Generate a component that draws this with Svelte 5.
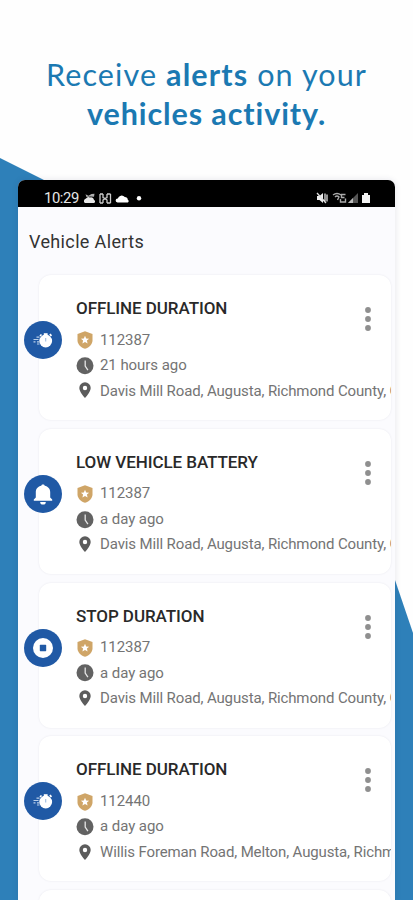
<script>
  const alerts = [
    { title: 'OFFLINE DURATION', icon: 'offline', unit: '112387', time: '21 hours ago', place: 'Davis Mill Road, Augusta, Richmond County, Georgia' },
    { title: 'LOW VEHICLE BATTERY', icon: 'bell', unit: '112387', time: 'a day ago', place: 'Davis Mill Road, Augusta, Richmond County, Georgia' },
    { title: 'STOP DURATION', icon: 'stop', unit: '112387', time: 'a day ago', place: 'Davis Mill Road, Augusta, Richmond County, Georgia' },
    { title: 'OFFLINE DURATION', icon: 'offline', unit: '112440', time: 'a day ago', place: 'Willis Foreman Road, Melton, Augusta, Richmond County' }
  ];
</script>

<main class="page">
  <svg class="backdrop" viewBox="0 0 413 900" aria-hidden="true">
    <path d="M0 158L42 179L200 260L395 580L413 633V900H0Z" fill="#2e80b9" />
  </svg>
  <h1 class="headline">
    <span class="line one">Receive <b>alerts</b> on your</span>
    <span class="line two"><b>vehicles activity.</b></span>
  </h1>

  <section class="phone">
    <header class="status">
      <span class="clock">10:29</span>
      <svg class="left-icons" width="60" height="14" viewBox="0 0 60 14">
        <g fill="#e8e8e8">
          <path d="M1 12a2.500 2.500 0 0 1 1-4.500a3 3 0 0 1 4-1a3 3 0 0 1 4 2.500a1.600 1.600 0 0 1 0 3Z" />
          <path d="M1.500 3.200l3 1.500l3-1.700l3-.3l-.5 3l-3.500-.2l-4 .5Z" opacity=".75" />
          <path d="M33.500 11.500a2 2 0 0 1 .3-4a4 4 0 0 1 7-1.400a3 3 0 0 1 3 2.700a1.500 1.500 0 0 1 0 2.700Z" fill="#fff" />
          <circle cx="55" cy="7.200" r="2.200" fill="#fff" />
        </g>
        <path d="M16 3v9M19 3v3.500l2 1l2-1V3M19 12V9l2-1.500L23 9v3M26.500 3v9M16 3h3M23 3h3.500M16 12h3M23 12h3.500" fill="none" stroke="#ccc" stroke-width="1.300" />
      </svg>
      <svg class="right-icons" width="56" height="14" viewBox="0 0 56 14">
        <path d="M1 5h2.500L7 2v10L3.500 9H1Z" fill="#eee" />
        <path d="M1 2l9 10M9 2.500v9M11 3.500v7" fill="none" stroke="#ddd" stroke-width="1.300" />
        <path d="M17 4q4-3 8 0M19 6q2-2 4 0l-1.500 3M29.500 3.500h-4v3h3M29.500 7.500v3.500h-5V8" fill="none" stroke="#aaa" stroke-width="1.400" />
        <path d="M32 12L42 2v10Z" fill="#555" /><path d="M32 12L37 7v5Z" fill="#bbb" />
        <path d="M46 4h2V2h4v2h2v8h-8Z" fill="#f4f4f4" />
      </svg>
    </header>
    <h2>Vehicle Alerts</h2>

    <div class="list">
      {#each alerts as a}
        <article class="card">
          <span class="badge">
            <svg width="38" height="38" viewBox="0 0 38 38">
              <circle cx="19" cy="19" r="19" fill="#2059a5" />
              {#if a.icon === 'offline'}
                <g fill="#fff">
                  <circle cx="21.700" cy="20" r="6.400" />
                  <rect x="19.800" y="12.200" width="3.800" height="2" />
                  <path d="M25.200 13.700l1.200-1.200l1.700 1.700l-1.200 1.200ZM15.400 14.400l1.500-1.500l1.200 1.200l-1.500 1.500Z" />
                </g>
                <path d="M15.500 16.200h-3M14.500 18.500h-5M11.500 20.800h-2M15.500 20.800h-2.500M15.500 23h-2.500" stroke="#bad0ea" stroke-width="1.200" />
                <path d="M21.700 17v3.400" stroke="#9ebbe0" stroke-width="1.100" />
              {:else if a.icon === 'bell'}
                <path d="M19 9.500c1 0 1.600.5 1.700 1.300c3.300.7 5.500 3.100 5.500 6.400v5.400l2 2v1.200h-18.400v-1.200l2-2v-5.400c0-3.300 2.200-5.700 5.500-6.400c.1-.8.7-1.300 1.700-1.300Z" fill="#fff" />
                <path d="M16.200 27h5.600a2.800 2.600 0 0 1-5.600 0Z" fill="#fff" />
              {:else}
                <circle cx="19" cy="19" r="10" fill="#fff" />
                <rect x="15.800" y="15.800" width="6.400" height="6.400" rx=".6" fill="#2059a5" />
              {/if}
            </svg>
          </span>

          <div class="details">
            <h3>{a.title}</h3>
            <p>
              <svg width="18" height="18" viewBox="0 0 18 18">
                <path d="M9 .3L16.500 3v6.200c0 4-3 7-7.500 8.600C4.500 16.200 1.500 13.200 1.500 9.200V3Z" fill="#cfa567" />
                <path d="M9 4.700l1.200 2.700l2.900.3l-2.200 1.900l.7 2.900L9 11l-2.600 1.500l.7-2.900l-2.200-1.900l2.900-.3Z" fill="#fff" />
              </svg>
              <span>{a.unit}</span>
            </p>
            <p>
              <svg width="18" height="18" viewBox="0 0 18 18">
                <circle cx="9" cy="8.700" r="8.500" fill="#626262" />
                <path d="M9.200 3.500v5.500l2.700 4.200" fill="none" stroke="#e6e6e6" stroke-width="1.300" />
              </svg>
              <span>{a.time}</span>
            </p>
            <p>
              <svg width="18" height="18" viewBox="0 0 18 18">
                <path fill-rule="evenodd" d="M9 .3a5.700 5.700 0 0 0-5.700 5.700C3.300 10.100 9 16.100 9 16.100s5.700-6 5.700-10.100A5.700 5.700 0 0 0 9 .3Zm0 3.500a2.200 2.200 0 1 1 0 4.400a2.200 2.200 0 0 1 0-4.400Z" fill="#5c5c5c" />
              </svg>
              <span class="place">{a.place}</span>
            </p>
          </div>

          <svg class="menu" width="8" height="26" viewBox="0 0 8 26">
            <g fill="#8f8f8f"><circle cx="4" cy="4" r="2.900" /><circle cx="4" cy="13" r="2.900" /><circle cx="4" cy="22" r="2.900" /></g>
          </svg>
        </article>
      {/each}
      <div class="card"></div>
    </div>
  </section>
</main>

<style>
  :global(body) { margin: 0; background: #fff; }
  .page {
    position: relative;
    box-sizing: border-box;
    width: 413px;
    height: 900px;
    padding-top: 55px;
    overflow: hidden;
    background: #fefefe;
    font-family: Roboto, "Liberation Sans", sans-serif;
  }
  .backdrop { position: absolute; inset: 0; width: 413px; height: 900px; }
  .headline {
    position: relative;
    height: 125px;
    margin: 0;
    color: #1b79b2;
    font: 400 30.500px/39px Lato, "Open Sans", sans-serif;
    font-variant-ligatures: none;
    text-align: center;
    white-space: nowrap;
  }
  .line { display: block; }
  .one { letter-spacing: 1.120px; }
  .two { letter-spacing: 0.900px; }
  .headline b { font-weight: 700; }
  .phone {
    position: relative;
    width: 377px;
    height: 721px;
    margin-left: 18px;
    overflow: hidden;
    border-radius: 7px 7px 0 0;
    background: #fbfbfe;
    box-shadow: 0 0 6px rgba(40, 40, 90, .12);
  }
  .status {
    display: flex;
    align-items: center;
    box-sizing: border-box;
    height: 27px;
    padding: 8px 23px 0 26px;
    background: #000;
    color: #e6e6e6;
  }
  .clock { width: 40px; font-size: 14.800px; letter-spacing: -0.4px; }
  .right-icons { margin-left: auto; }
  h2 {
    height: 68px;
    margin: 0;
    padding-left: 11px;
    color: #333;
    font-size: 18px;
    font-weight: 400;
    letter-spacing: 0.360px;
    line-height: 70px;
  }
  .list { display: flex; flex-direction: column; gap: 8.800px; padding: 0 4px 0 21px; }
  .card {
    position: relative;
    display: flex;
    flex: none;
    box-sizing: border-box;
    height: 145px;
    padding: 20px 0 0 37px;
    border-radius: 12px;
    background: #fff;
    box-shadow: 0 0 2px rgba(60, 60, 100, .11);
  }
  .badge { position: absolute; left: -15.500px; top: 46px; width: 38px; height: 38px; }
  .badge svg { display: block; }
  .details { flex: 1; min-width: 0; }
  h3 {
    height: 32.500px;
    margin: 0;
    color: #292929;
    font-size: 17px;
    font-weight: 500;
    letter-spacing: -0.070px;
    line-height: 26px;
    white-space: nowrap;
  }
  p {
    display: flex;
    align-items: center;
    gap: 6px;
    height: 25.500px;
    margin: 0;
    overflow: hidden;
    color: #747474;
    font-size: 15px;
    letter-spacing: -0.060px;
    line-height: 25.500px;
    white-space: nowrap;
  }
  p svg { flex: none; }
  .place { letter-spacing: -0.130px; }
  .menu { position: absolute; right: 19px; top: 31px; }
</style>
